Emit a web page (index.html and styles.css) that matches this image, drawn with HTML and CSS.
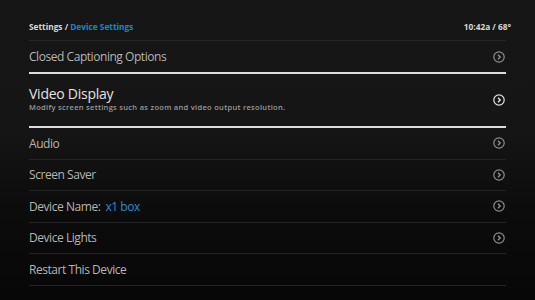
FILE: index.html
```html
<!DOCTYPE html>
<html>
<head>
<meta charset="utf-8">
<link rel="stylesheet" href="styles.css">
</head>
<body>
<div class="screen">
  <header class="top">
    <div class="crumb">Settings / <span class="blue">Device Settings</span></div>
    <div class="clock">10:42a / 68°</div>
  </header>
  <ul class="list">
    <li class="row thick-bottom"><span class="label">Closed Captioning Options</span><svg class="chev" viewBox="0 0 12 12"><circle cx="6" cy="6" r="5.2"/><path d="M5 3.8 L7.2 6 L5 8.2"/></svg></li>
    <li class="row focus thick-bottom">
      <div class="ftext"><div class="ftitle">Video Display</div><div class="fsub">Modify screen settings such as zoom and video output resolution.</div></div>
      <svg class="chev" viewBox="0 0 12 12"><circle cx="6" cy="6" r="5.2"/><path d="M5 3.8 L7.2 6 L5 8.2"/></svg>
    </li>
    <li class="row"><span class="label">Audio</span><svg class="chev" viewBox="0 0 12 12"><circle cx="6" cy="6" r="5.2"/><path d="M5 3.8 L7.2 6 L5 8.2"/></svg></li>
    <li class="row"><span class="label">Screen Saver</span><svg class="chev" viewBox="0 0 12 12"><circle cx="6" cy="6" r="5.2"/><path d="M5 3.8 L7.2 6 L5 8.2"/></svg></li>
    <li class="row"><span class="label">Device Name:<span class="val">x1 box</span></span><svg class="chev" viewBox="0 0 12 12"><circle cx="6" cy="6" r="5.2"/><path d="M5 3.8 L7.2 6 L5 8.2"/></svg></li>
    <li class="row"><span class="label">Device Lights</span><svg class="chev" viewBox="0 0 12 12"><circle cx="6" cy="6" r="5.2"/><path d="M5 3.8 L7.2 6 L5 8.2"/></svg></li>
    <li class="row"><span class="label">Restart This Device</span></li>
  </ul>
</div>
</body>
</html>
```
FILE: styles.css
```css
html, body {
  margin: 0;
  padding: 0;
}
body {
  width: 535px;
  height: 300px;
  overflow: hidden;
  background: linear-gradient(to bottom, #161616 0px, #151515 130px, #0c0c0c 210px, #070707 300px);
  font-family: "Open Sans", "Noto Sans", sans-serif;
}
.screen {
  padding: 0 29px 0 29px;
}
.top {
  display: flex;
  justify-content: space-between;
  align-items: center;
  height: 41px;
  box-sizing: border-box;
  padding-top: 12px;
  border-bottom: 1px solid #262626;
}
.crumb {
  font-size: 8.3px;
  font-weight: 700;
  color: #d8d8d8;
}
.blue { color: #1b86c8; }
.clock {
  font-size: 8.3px;
  font-weight: 700;
  color: #d8d8d8;
  margin-right: -5px;
}
.list {
  list-style: none;
  margin: 0;
  padding: 0;
}
.row {
  display: flex;
  align-items: center;
  justify-content: space-between;
  height: 30.5px;
  border-bottom: 1px solid #242424;
  padding-right: 1px;
}
.row.thick-bottom {
  height: 31px;
  border-bottom: 2px solid #dcdcdc;
}
.row.focus {
  height: 52px;
}
.label {
  font-size: 12px;
  color: #b4b4b4;
  letter-spacing: -0.45px;
}
.val {
  color: #2a8ccc;
  margin-left: 5px;
}
.ftext {
  display: flex;
  flex-direction: column;
  padding-bottom: 3px;
}
.ftitle {
  font-size: 14px;
  color: #e2e2e2;
  line-height: 16px;
  letter-spacing: -0.25px;
}
.fsub {
  font-size: 7.5px;
  font-weight: 600;
  color: #9a9a9a;
  line-height: 9px;
  margin-top: 1px;
  letter-spacing: 0.3px;
}
.chev {
  width: 12px;
  height: 12px;
  fill: none;
  stroke: #8e8e8e;
  stroke-width: 1.2;
}
.focus .chev { stroke: #e6e6e6; }
.chev path { stroke-width: 1.4; }
```
